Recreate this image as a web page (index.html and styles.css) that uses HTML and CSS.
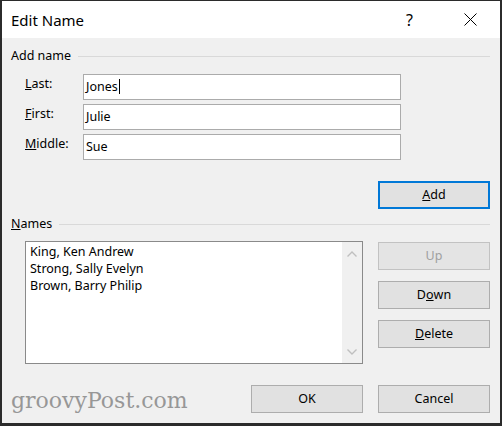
FILE: index.html
```html
<!DOCTYPE html>
<html>
<head>
<meta charset="utf-8">
<link rel="stylesheet" href="styles.css">
</head>
<body>
<div class="window">
  <div class="titlebar">
    <span class="title">Edit Name</span>
    <span class="help">?</span>
    <span class="close">
      <svg width="13" height="13" viewBox="0 0 13 13"><path d="M0.5 0.5 L12.5 12.5 M12.5 0.5 L0.5 12.5" stroke="#000" stroke-width="1" fill="none"/></svg>
    </span>
  </div>
  <div class="content">
    <div class="group-head"><span class="group-label">Add name</span><span class="group-line"></span></div>
    <div class="form">
      <span class="label"><u>L</u>ast:</span>
      <div class="field">Jones<span class="caret"></span></div>
      <span class="label"><u>F</u>irst:</span>
      <div class="field">Julie</div>
      <span class="label"><u>M</u>iddle:</span>
      <div class="field">Sue</div>
    </div>
    <div class="add-row"><div class="btn btn-default"><u>A</u>dd</div></div>
    <div class="group-head names-head"><span class="group-label"><u>N</u>ames</span><span class="group-line"></span></div>
    <div class="names">
      <div class="listbox">
        <div class="items">
          <div class="item">King, Ken Andrew</div>
          <div class="item">Strong, Sally Evelyn</div>
          <div class="item">Brown, Barry Philip</div>
        </div>
        <div class="scrollbar">
          <svg width="10" height="6" viewBox="0 0 10 6"><path d="M0.5 5.5 L5 1 L9.5 5.5" stroke="#bfbfbf" stroke-width="1.4" fill="none"/></svg>
          <svg width="10" height="6" viewBox="0 0 10 6"><path d="M0.5 0.5 L5 5 L9.5 0.5" stroke="#bfbfbf" stroke-width="1.4" fill="none"/></svg>
        </div>
      </div>
      <div class="side-buttons">
        <div class="btn btn-disabled">Up</div>
        <div class="btn">D<u>o</u>wn</div>
        <div class="btn"><u>D</u>elete</div>
      </div>
    </div>
    <div class="footer">
      <div class="btn">OK</div>
      <div class="btn">Cancel</div>
    </div>
  </div>
  <div class="watermark">groovyPost.com</div>
</div>
</body>
</html>
```

FILE: styles.css
```css
html, body {
  margin: 0;
  padding: 0;
}
body {
  width: 502px;
  height: 426px;
  overflow: hidden;
  font-family: "Noto Sans", "Open Sans", sans-serif;
  font-size: 12.5px;
  color: #000;
}
.window {
  position: relative;
  width: 502px;
  height: 426px;
  box-sizing: border-box;
  border-style: solid;
  border-color: #2b2b2b;
  border-width: 1px 2px 3px 2px;
  background: #f0f0f0;
  display: flex;
  flex-direction: column;
}
.titlebar {
  height: 37px;
  background: #fff;
  display: flex;
  align-items: center;
  padding-left: 9px;
  flex: none;
}
.title {
  font-size: 15px;
  line-height: 20px;
}
.help {
  margin-left: auto;
  font-size: 16px;
  line-height: 20px;
  width: 10px;
}
.close {
  margin-left: 48px;
  margin-right: 23px;
  width: 13px;
  height: 13px;
  display: flex;
}
.content {
  padding: 9px 10px 0 9px;
  display: flex;
  flex-direction: column;
}
.group-head {
  display: flex;
  align-items: center;
  height: 18px;
  line-height: 18px;
}
.group-line {
  flex: 1;
  margin-left: 7px;
  border-top: 1px solid #d9d9d9;
  height: 0;
}
.form {
  margin-top: 9px;
  margin-left: 14px;
  display: grid;
  grid-template-columns: 58px 318px;
  row-gap: 4px;
}
.label {
  line-height: 18px;
  margin-top: 1px;
}
.field {
  height: 26px;
  box-sizing: border-box;
  border: 1px solid #ababab;
  background: #fff;
  padding: 3px 2px 0 2px;
  line-height: 18px;
  white-space: nowrap;
}
.caret {
  display: inline-block;
  width: 0;
  height: 15px;
  border-left: 1px solid #000;
  vertical-align: -3px;
  margin-left: 1px;
}
.add-row {
  display: flex;
  justify-content: flex-end;
  margin-top: 21px;
}
.btn {
  width: 112px;
  height: 28px;
  box-sizing: border-box;
  border: 1px solid #adadad;
  background: #e1e1e1;
  display: flex;
  align-items: center;
  justify-content: center;
  line-height: 18px;
}
.btn-default {
  border: 2px solid #0078d7;
}
.btn-disabled {
  color: #a0a0a0;
  border-color: #c2c2c2;
  background: #e4e4e4;
}
.names-head {
  margin-top: 6px;
}
.names {
  margin-top: 8px;
  margin-left: 14px;
  display: flex;
  gap: 15px;
}
.listbox {
  width: 339px;
  height: 123px;
  box-sizing: border-box;
  border: 1px solid #8a8a8a;
  background: #fff;
  display: flex;
}
.items {
  flex: 1;
  padding: 1px 4px;
}
.item {
  line-height: 17px;
  white-space: nowrap;
}
.scrollbar {
  width: 20px;
  background: #f0f0f0;
  display: flex;
  flex-direction: column;
  justify-content: space-between;
  align-items: center;
  padding: 9px 0 8px;
  box-sizing: border-box;
}
.side-buttons {
  margin-top: 1px;
  display: flex;
  flex-direction: column;
  gap: 11px;
}
.footer {
  margin-top: 21px;
  display: flex;
  justify-content: flex-end;
  gap: 15px;
}
.watermark {
  position: absolute;
  left: 9px;
  top: 385px;
  font-family: "DejaVu Serif", serif;
  font-size: 22px;
  line-height: 30px;
  color: #979797;
}
```
